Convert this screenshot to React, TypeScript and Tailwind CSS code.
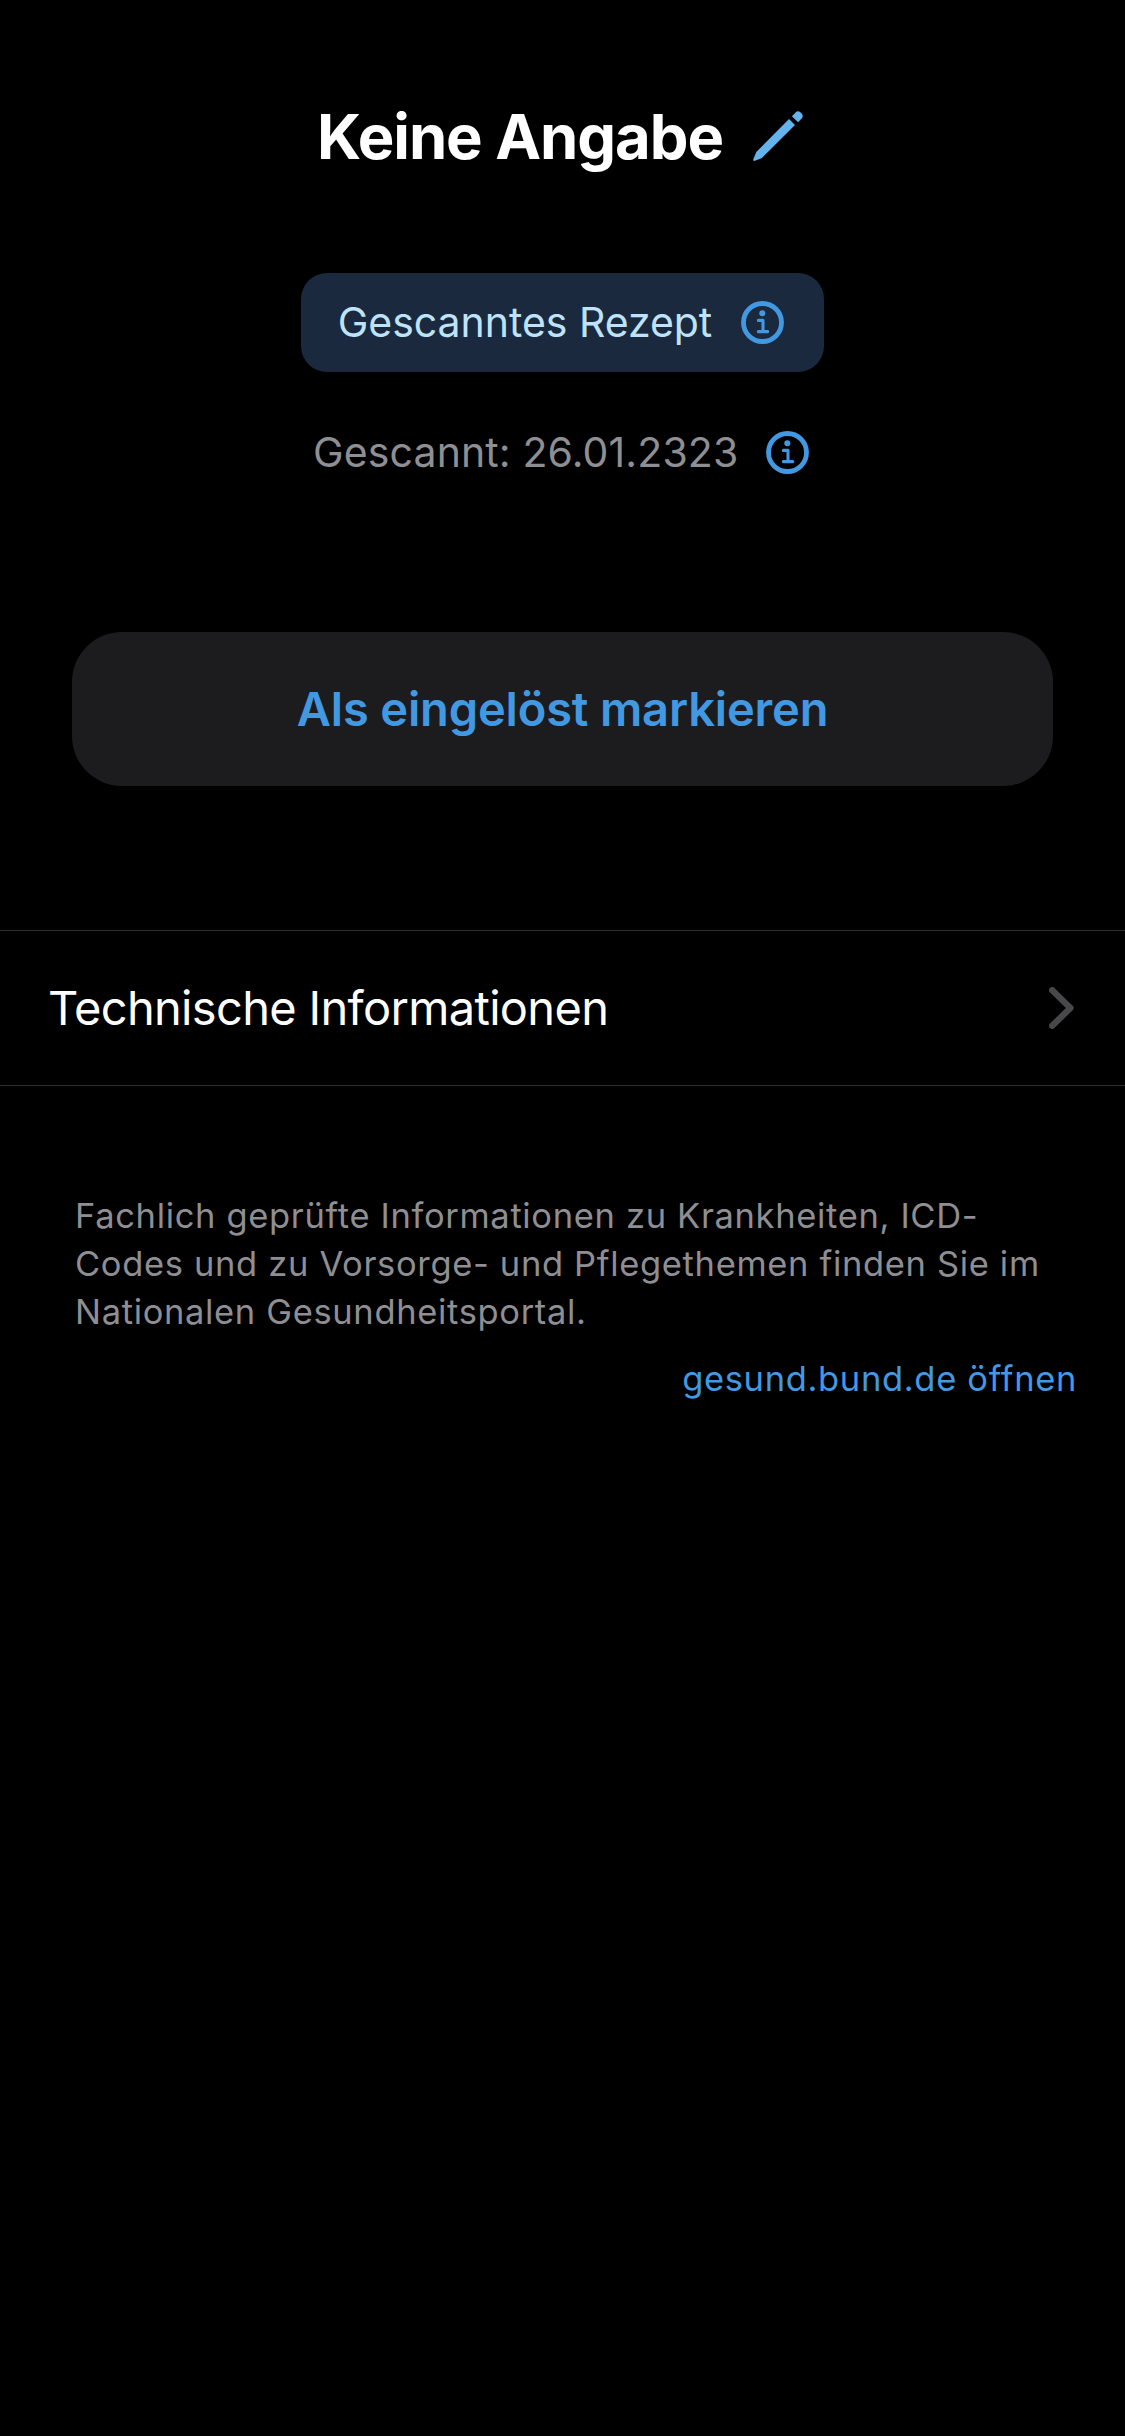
function PencilIcon() {
  return (
    <svg viewBox="0 0 56 52" className="h-[52px] w-[56px] shrink-0 fill-[#63b3ed]" aria-hidden="true">
      <path d="M36 7.9 42 14 9.4 46.4Q8.7 47.1 7.8 47.5L1.9 49.8Q-.2 50.4.3 48.2L2.9 41.9Q3.3 40.9 4 40.2Z" />
      <path d="M38.9 5.2 42.6 1.4Q45 -.9 47.6 1.6L48.5 2.5Q50.9 5 48.7 7.4L45 11.3Z" />
    </svg>
  );
}

function InfoIcon() {
  return (
    <svg viewBox="0 0 43 43" fill="none" className="size-[43px] shrink-0 stroke-[#4299e1]" aria-hidden="true">
      <circle cx="21.5" cy="21.5" r="19" strokeWidth="4.8" />
      <circle cx="21.3" cy="12.3" r="3" stroke="none" className="fill-[#4299e1]" />
      <path d="M17.4 19.4h4.6v11.2M17.3 30.6h9.4" strokeWidth="3.1" strokeLinecap="round" strokeLinejoin="round" />
    </svg>
  );
}

function ChevronIcon() {
  return (
    <svg viewBox="0 0 25 42" fill="none" className="h-[42px] w-[25px] shrink-0 stroke-[#48484a]" aria-hidden="true">
      <path d="M3.2 3.2 21.4 21 3.2 38.8" strokeWidth="6.3" strokeLinecap="round" strokeLinejoin="round" />
    </svg>
  );
}

export default function App() {
  return (
    <main className="flex min-h-[2436px] w-full flex-col bg-black font-['Inter',sans-serif] text-white">
      <header className="flex flex-col items-center pt-24">
        <div className="flex h-[82px] items-center gap-[30px] pl-px">
          <h1 className="pb-px text-[61.5px] leading-[80px] font-bold tracking-[-1.06px] whitespace-nowrap">
            Keine Angabe
          </h1>
          <PencilIcon />
        </div>

        <div className="mt-[95px] flex h-[99px] items-center gap-[29px] rounded-[26px] bg-[#1a293d] pr-10 pl-[37px]">
          <span className="pb-0.5 text-[41px] leading-[60px] tracking-[-0.035px] whitespace-nowrap text-[#bee3f8]">
            Gescanntes Rezept
          </span>
          <InfoIcon />
        </div>

        <div className="mt-[50px] flex h-[61px] items-center gap-[27.5px] pr-[3px]">
          <span className="pb-0.5 text-[41px] leading-[60px] tracking-[0.116px] whitespace-nowrap text-[#8e8e93]">
            Gescannt: 26.01.2323
          </span>
          <InfoIcon />
        </div>
      </header>

      <button className="mx-[72px] mt-[149px] h-[154px] rounded-[50px] bg-[#1c1c1e] text-[47px] leading-[60px] font-semibold tracking-[-0.151px] text-[#4299e1]">
        Als eingelöst markieren
      </button>

      <button className="mt-36 flex h-[156px] items-center justify-between border-y border-[#303033] pr-[51px] pl-12 text-left">
        <span className="text-[47px] leading-[60px] tracking-[-0.671px]">Technische Informationen</span>
        <ChevronIcon />
      </button>

      <footer className="mt-[106px] flex flex-col pr-12 pl-[75px] text-[34.5px] leading-[48px] tracking-[0.66px]">
        <p className="text-[#8e8e93]">
          Fachlich geprüfte Informationen zu Krankheiten, ICD-
          <br />
          Codes und zu Vorsorge- und Pflegethemen finden Sie im
          <br />
          Nationalen Gesundheitsportal.
        </p>
        <a className="mt-[19px] self-end text-[#4299e1]">gesund.bund.de öffnen</a>
      </footer>
    </main>
  );
}
